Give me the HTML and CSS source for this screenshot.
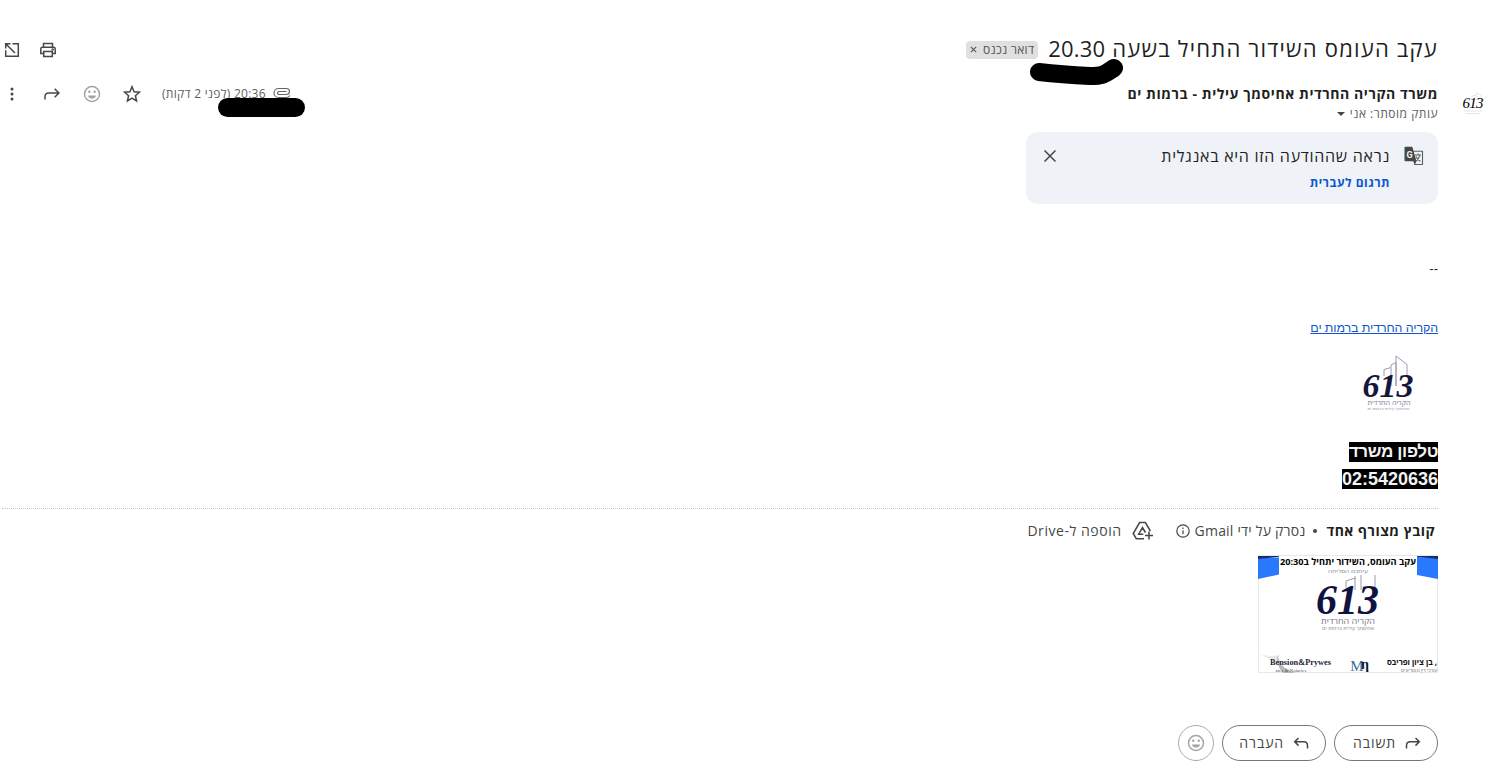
FILE: index.html
```html
<!DOCTYPE html>
<html lang="he" dir="rtl">
<head>
    <meta charset="UTF-8">
    <meta name="viewport" content="width=device-width, initial-scale=1.0">
    <title>עקב העומס השידור התחיל בשעה 20.30</title>
    <link rel="stylesheet" href="styles.css">
</head>
<body>
    <div class="mail">
        <div class="subject-row">
            <h1 class="subject">עקב העומס השידור התחיל בשעה <span class="hour">20.30</span></h1>
            <div class="label"><span class="label-name">דואר נכנס</span><svg class="label-x" width="7" height="7" viewBox="0 0 7 7"><path d="M.8.8l5.4 5.4M6.2.8L.8 6.2"/></svg></div>
            <div class="subject-tools">
                <svg class="icon" width="20" height="20" viewBox="0 0 20 20"><path d="M5.5 7V3.5h9V7M5.500 13.500h-2.700V9c0-1 .6-1.700 1.600-1.700h11.200c1 0 1.600.7 1.600 1.700v4.500h-2.700M5.700 11.500h8.600v5H5.700z"/><circle cx="14.600" cy="9.400" r=".5"/></svg>
                <svg class="icon" width="20" height="20" viewBox="0 0 20 20"><path d="M8.500 3.700H3.700v4.800M3.700 3.700l9.300 9.300M10.500 3.700h5.800v12.600H3.700v-6"/></svg>
            </div>
            <svg class="mark mark-subject" width="100" height="32" viewBox="0 0 100 32"><path d="M10 14C28 16 42 17 61 18C76 18 77 15 85 10"/></svg>
        </div>

        <div class="sender">
            <svg class="avatar" width="24" height="24" viewBox="0 0 24 24">
                <path class="avatar-lines" d="M11 8V4l4-1v5M15 3V1l5 2v7"/>
                <text class="avatar-num" x="12" y="16" textLength="21">613</text>
                <path class="avatar-lines" d="M3 19h18M5 21.500h14"/>
            </svg>
            <div class="sender-line">
                <div class="sender-name">משרד הקריה החרדית אחיסמך עילית - ברמות ים</div>
                <div class="sender-tools">
                    <svg class="clip" width="18" height="12" viewBox="0 0 18 12"><path d="M17 8.500c-.8 1.400-2 2-3.500 2H5.500a4.500 4.500 0 0 1 0-9h8a3 3 0 0 1 0 6H6a1.400 1.400 0 0 1 0-3h7.500"/></svg>
                    <span class="time">20:36 (לפני 2 דקות)</span>
                    <svg class="icon star" width="20" height="20" viewBox="0 0 20 20"><path d="M10 2.700l2.100 5 5.300.5-4 3.500 1.200 5.300-4.600-2.800L5.400 17l1.200-5.300-4-3.500 5.300-.5z"/></svg>
                    <svg class="icon smile" width="20" height="20" viewBox="0 0 20 20"><circle cx="10" cy="10" r="7.500"/><path class="fill" d="M5.800 11.500h8.400a4.400 4.400 0 0 1-8.400 0z"/><circle class="fill" cx="7.300" cy="7.800" r="1.200"/><circle class="fill" cx="12.700" cy="7.800" r="1.200"/></svg>
                    <svg class="icon" width="20" height="20" viewBox="0 0 20 20"><path d="M3 15.500v-2.700c0-2.300 1.500-3.800 3.800-3.800h9.500M12.700 4.800l4.200 4.200-4.200 4.200"/></svg>
                    <svg class="icon" width="20" height="20" viewBox="0 0 20 20"><circle class="dot" cx="10" cy="5" r="1.500"/><circle class="dot" cx="10" cy="10" r="1.500"/><circle class="dot" cx="10" cy="15" r="1.500"/></svg>
                </div>
            </div>
            <div class="recipient"><span>עותק מוסתר: אני</span><i class="arrow"></i></div>
            <div class="mark mark-time"></div>
        </div>

        <div class="translate">
            <svg class="translate-icon" width="20" height="20" viewBox="0 0 20 20">
                <path class="tr-page" d="M8 5.200h10.500v13.300h-8"/>
                <path class="tr-solid" d="M1.500.8h6.800l4.200 14.400H1.500a1 1 0 0 1-1-1V1.800a1 1 0 0 1 1-1zM9.300 15.200h3.200l-1.800 3.800z"/>
                <text class="tr-g" x="5.500" y="11.500">G</text>
                <path class="tr-page" d="M11 9h6M14 7.500V9M16 9c-.5 2.500-2 4.500-4.300 6M12 10.500c.8 2 2.300 3.600 4.300 4.800"/>
            </svg>
            <div class="translate-text">
                <div class="translate-title">נראה שההודעה הזו היא באנגלית</div>
                <a class="translate-link">תרגום לעברית</a>
            </div>
            <svg class="icon close" width="14" height="14" viewBox="0 0 14 14"><path d="M1.500 1.500l11 11M12.500 1.500l-11 11"/></svg>
        </div>

        <div class="message">
            <div class="dashes">--</div>
            <a class="site-link">הקריה החרדית ברמות ים</a>
            <svg class="logo" width="60" height="60" viewBox="0 0 60 60">
                <path class="logo-lines" d="M26 21V14.500l7-2V31M33 12.500V10l5-2.500V31M38 31V1l11 8.500V21"/>
                <text class="logo-num" x="30" y="42" textLength="51" lengthAdjust="spacingAndGlyphs">613</text>
                <text class="logo-name" x="31" y="49.500" textLength="43" lengthAdjust="spacingAndGlyphs">הקריה החרדית</text>
                <text class="logo-sub" x="30.500" y="54.500" textLength="42" lengthAdjust="spacingAndGlyphs">אחיסמך עילית ברמות ים</text>
            </svg>
            <div class="phone phone-title"><span>טלפון משרד</span></div>
            <div class="phone phone-number"><span>02:5420636</span></div>
        </div>

        <div class="attach-row">
            <span class="attach-count">קובץ מצורף אחד</span>
            <span class="bullet"></span>
            <span class="scanned">נסרק על ידי Gmail</span>
            <svg class="icon info" width="14" height="14" viewBox="0 0 14 14"><circle cx="7" cy="7" r="6.200"/><path d="M7 6.200v4M7 3.600V5"/></svg>
            <svg class="icon drive" width="22" height="20" viewBox="0 0 22 20"><path d="M12 17.700H4.300L1.200 12.500 7.600 1.500h5.800l5 8.500M11.300 13.200H6.600l3.900-6.700 2.900 5M17 10.500v8M13 14.500h8"/></svg>
            <span class="add-drive">הוספה ל-Drive</span>
        </div>

        <div class="thumb">
            <svg width="180" height="118" viewBox="0 0 180 118">
                <path class="ribbon" d="M0 2.500h21v17L0 24zM159 1h21v23l-21-4z"/>
                <path class="ribbon-dark" d="M0 1h21v.8L0 4zM159 1h21v3l-21-2.500z"/>
                <path class="fold" d="M0 98c7 3 13 4 21 2 0 9 6 14 17 18z"/>
                <path class="fold-shade" d="M20 100c0 9 6 14 18 18H25c-5-6-7-12-5-18z"/>
                <text class="th-title" x="90" y="10" textLength="136" lengthAdjust="spacingAndGlyphs">עקב העומס, השידור יתחיל ב20:30</text>
                <text class="th-small" x="90" y="18" textLength="40" lengthAdjust="spacingAndGlyphs">עימכם הסליחה</text>
                <path class="th-lines" d="M88 33V26l9-3v12M97 24v-3M103 20v15M117 20v15"/>
                <text class="th-num" x="89.500" y="59" textLength="63" lengthAdjust="spacingAndGlyphs">613</text>
                <text class="th-name" x="90" y="68.500" textLength="54" lengthAdjust="spacingAndGlyphs">הקריה החרדית</text>
                <text class="th-small" x="90" y="75" textLength="52" lengthAdjust="spacingAndGlyphs">אחיסמך עילית ברמות ים</text>
                <text class="th-serif" x="42.500" y="110" textLength="61" lengthAdjust="spacingAndGlyphs">Bension&amp;Prywes</text>
                <text class="th-serif-small" x="33" y="116.500" textLength="31" lengthAdjust="spacingAndGlyphs">ates &amp; Notaries</text>
                <text class="th-m" x="99" y="116">M</text>
                <text class="th-n" x="107" y="114">η</text>
                <text class="th-firm" x="154" y="110" textLength="50" lengthAdjust="spacingAndGlyphs">, בן ציון ופריבס</text>
                <text class="th-firm-small" x="161" y="116.500" textLength="36" lengthAdjust="spacingAndGlyphs">עורכי דין ונוטריונים</text>
            </svg>
        </div>

        <div class="actions">
            <div class="pill"><svg class="icon" width="16" height="14" viewBox="0 0 16 14"><path d="M1.500 12.500V9.700c0-2.500 1.300-3.900 3.700-3.900h8.700M10.500 2l3.800 3.800-3.800 3.800"/></svg><span>תשובה</span></div>
            <div class="pill"><svg class="icon" width="16" height="14" viewBox="0 0 16 14"><path d="M14.500 12.500V9.700c0-2.500-1.300-3.900-3.700-3.900H2.100M5.500 2L1.700 5.800l3.800 3.800"/></svg><span>העברה</span></div>
            <div class="pill pill-round"><svg class="icon smile" width="20" height="20" viewBox="0 0 20 20"><circle cx="10" cy="10" r="7.500"/><path class="fill" d="M5.800 11.500h8.400a4.400 4.400 0 0 1-8.400 0z"/><circle class="fill" cx="7.300" cy="7.800" r="1.200"/><circle class="fill" cx="12.700" cy="7.800" r="1.200"/></svg></div>
        </div>
    </div>
</body>
</html>
```

FILE: styles.css
```css
* {
    margin: 0;
    padding: 0;
    box-sizing: border-box;
}
body {
    font-family: "Open Sans", "Liberation Sans", sans-serif;
    background: #fff;
    color: #1f1f1f;
    overflow: hidden;
}
svg {
    display: block;
    flex: none;
}
.mail {
    padding: 30px 54px 0 2px;
}
.icon {
    fill: none;
    stroke: #444746;
    stroke-width: 1.5;
}
.icon .dot {
    fill: #444746;
    stroke: none;
}
.smile {
    stroke: #a3a5a4;
}
.smile .fill {
    fill: #a3a5a4;
    stroke: none;
}

/* Subject */
.subject-row {
    position: relative;
    display: flex;
    align-items: center;
    height: 38px;
}
.subject {
    font-size: 22px;
    font-weight: 400;
    line-height: 36px;
    letter-spacing: 1.2px;
    white-space: nowrap;
    margin-top: -2px;
}
.hour {
    letter-spacing: .2px;
}
.label {
    display: flex;
    align-items: center;
    justify-content: space-between;
    width: 72px;
    height: 18px;
    margin: 1px 10px 0 0;
    padding: 0 4px;
    border-radius: 4px;
    background: #dfe1de;
    color: #555;
    font-size: 12px;
    letter-spacing: .3px;
    line-height: 18px;
    white-space: nowrap;
}
.label-x {
    stroke: #555;
    stroke-width: 1.1;
}
.subject-tools {
    display: flex;
    gap: 16px;
    margin: 2px auto 0 0;
}

/* Hand drawn marker strokes */
.mark {
    position: absolute;
}
.mark-subject {
    left: 1027px;
    top: 28px;
    fill: none;
    stroke: #000;
    stroke-width: 18;
    stroke-linecap: round;
}
.mark-time {
    left: 216px;
    top: 14px;
    width: 87px;
    height: 19px;
    border-radius: 10px;
    background: #000;
}

/* Sender */
.sender {
    position: relative;
    margin-top: 16px;
    height: 40px;
}
.avatar {
    position: absolute;
    right: -47px;
    top: 8px;
}
.avatar-num {
    font: italic 15px "Liberation Serif", serif;
    text-anchor: middle;
}
.avatar-lines {
    fill: none;
    stroke: #dcdce2;
    stroke-width: .7;
}
.sender-line {
    display: flex;
    justify-content: space-between;
    height: 20px;
    line-height: 20px;
    white-space: nowrap;
}
.sender-name {
    font-size: 14px;
    font-weight: 700;
    letter-spacing: .58px;
}
.sender-tools {
    display: flex;
    align-items: center;
    gap: 20px;
}
.clip {
    margin: -3px 0 0 -13px;
    fill: none;
    stroke: #666;
    stroke-width: 1.2;
}
.time {
    color: #5e5e5e;
    font-size: 12px;
    letter-spacing: .27px;
}
.recipient {
    display: flex;
    align-items: center;
    color: #5e5e5e;
    font-size: 12px;
    letter-spacing: .5px;
    line-height: 20px;
}
.arrow {
    margin-right: 5px;
    border: 4px solid transparent;
    border-top-color: #444746;
    border-bottom: 0;
}

/* Translate banner */
.translate {
    display: flex;
    width: 412px;
    height: 72px;
    margin-top: 8px;
    padding: 14px 14px 0 17px;
    border-radius: 12px;
    background: #eff3f8;
}
.translate-text {
    flex: 1;
    margin-right: 14px;
}
.translate-title {
    font-size: 16px;
    font-weight: 500;
    letter-spacing: .72px;
    line-height: 20px;
}
.translate-link {
    display: block;
    margin-top: 7px;
    color: #0b57d0;
    font-size: 12px;
    font-weight: 700;
    letter-spacing: .5px;
    line-height: 20px;
}
.close {
    margin-top: 3px;
}
.tr-page {
    fill: none;
    stroke: #5b5e5d;
    stroke-width: 1.1;
}
.tr-solid {
    fill: #444746;
}
.tr-g {
    fill: #eff3f8;
    font: bold 9px Roboto, sans-serif;
    text-anchor: middle;
}

/* Message body */
.message {
    height: 304px;
    padding-top: 55px;
}
.dashes {
    font: 13px/20px "Liberation Sans", sans-serif;
}
.site-link {
    display: block;
    margin-top: 39px;
    color: #1155cc;
    font: 12.5px/20px "Liberation Sans", sans-serif;
    letter-spacing: -.13px;
    text-decoration: underline;
}
.logo {
    margin: 17px 20px 0 0;
}
.logo text,
.thumb text {
    text-anchor: middle;
}
.logo-lines,
.th-lines {
    fill: none;
    stroke: #9a9cb0;
    stroke-width: 1;
}
.logo-num {
    fill: #16163a;
    font: italic bold 34px "Liberation Serif", serif;
}
.logo-name {
    fill: #7c7c8c;
    font: 6.5px "Open Sans", sans-serif;
}
.logo-sub {
    fill: #9090a0;
    font: 3.6px "Open Sans", sans-serif;
}
.phone {
    color: #f3f3f3;
    font: bold 18px/20px "Liberation Sans", sans-serif;
}
.phone span {
    display: inline-block;
    height: 20px;
    background: #000;
}
.phone-title {
    margin-top: 27px;
    font-size: 17px;
    letter-spacing: -.35px;
}
.phone-number {
    margin-top: 7px;
}

/* Attachments */
.attach-row {
    display: flex;
    align-items: center;
    height: 46px;
    padding: 0 3px 2px 0;
    border-top: 1px dotted #c4c7c5;
    font-size: 14px;
    white-space: nowrap;
}
.attach-count {
    font-weight: 700;
    letter-spacing: .5px;
}
.bullet {
    width: 4px;
    height: 4px;
    margin: 0 9px 0 8px;
    border-radius: 50%;
    background: #444746;
}
.scanned,
.add-drive {
    color: #444746;
}
.scanned {
    letter-spacing: .2px;
}
.add-drive {
    letter-spacing: .55px;
}
.info {
    margin-right: 5px;
    stroke-width: 1.2;
}
.drive {
    margin: 0 22px 0 10px;
}
.thumb {
    width: 180px;
    height: 118px;
    margin-top: 1px;
    border: 1px solid #e8e8e8;
}
.thumb svg {
    margin: -1px;
}
.ribbon {
    fill: #2979ff;
}
.ribbon-dark {
    fill: #122d72;
}
.th-title {
    fill: #000;
    font: bold 9px "Open Sans", sans-serif;
}
.th-small {
    fill: #85858f;
    font: 5px "Open Sans", sans-serif;
}
.th-num {
    fill: #10133f;
    font: italic bold 43px "Liberation Serif", serif;
}
.th-name {
    fill: #777784;
    font: 8.5px "Open Sans", sans-serif;
}
.th-serif {
    fill: #1b1f35;
    font: bold 9px "Liberation Serif", serif;
}
.th-serif-small {
    fill: #555;
    font: 5px "Liberation Serif", serif;
}
.th-m {
    fill: #3b6d9c;
    font: 15px "Liberation Serif", serif;
}
.th-n {
    fill: #0d1434;
    font: bold 14px "Liberation Serif", serif;
}
.th-firm {
    fill: #111;
    font: bold 8px "Open Sans", sans-serif;
}
.th-firm-small {
    fill: #666;
    font: 4.5px "Open Sans", sans-serif;
}
.fold {
    fill: #e9e9e9;
}
.fold-shade {
    fill: #b9b9b9;
}

/* Reply buttons */
.actions {
    display: flex;
    gap: 8px;
    margin-top: 52px;
}
.pill {
    display: flex;
    align-items: center;
    width: 104px;
    height: 36px;
    padding-right: 16px;
    border: 1px solid #747775;
    border-radius: 18px;
    color: #444746;
    font-size: 14px;
    font-weight: 500;
    letter-spacing: .9px;
}
.pill span {
    margin: -2px 9px 0 0;
}
.pill-round {
    justify-content: center;
    width: 36px;
    padding: 0;
    border-color: #a9abaa;
}
```
